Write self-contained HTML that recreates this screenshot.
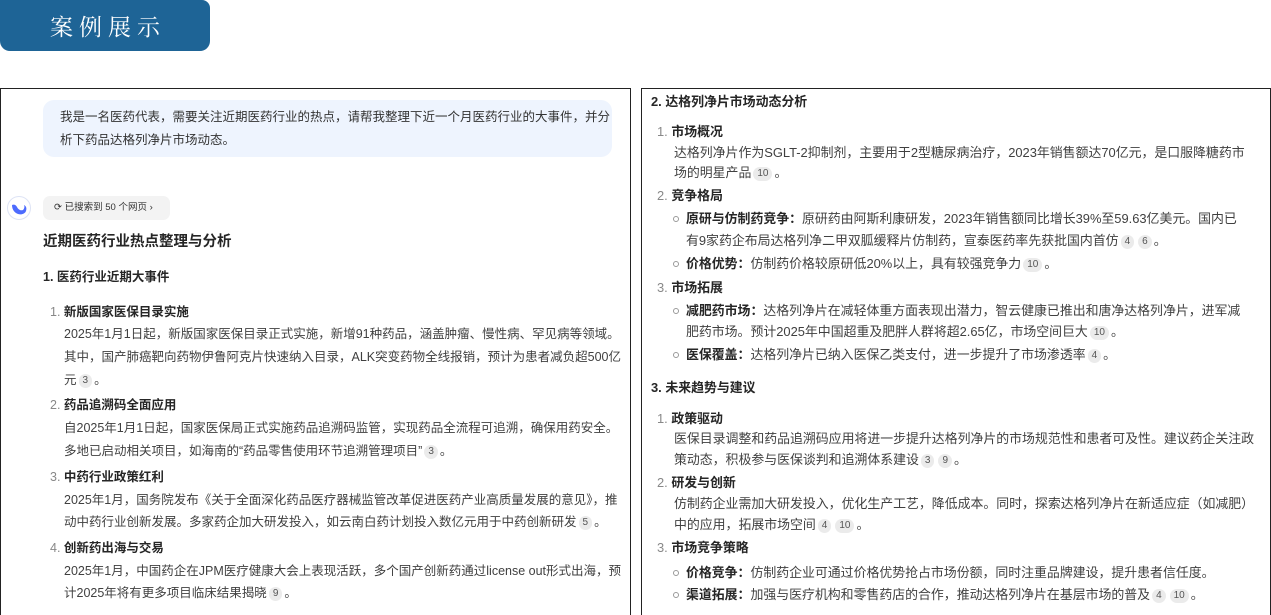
<!DOCTYPE html>
<html><head><meta charset="utf-8"><style>
*{margin:0;padding:0;box-sizing:border-box}
body{width:1271px;height:615px;background:#fff;position:relative;overflow:hidden;font-family:"Liberation Sans","Noto Sans CJK SC",sans-serif;color:#404040}
.hdr{position:absolute;left:0;top:0;width:210px;height:51px;background:#1e6496;border-radius:0 8px 10px 10px;color:#fff;font-family:"Noto Serif CJK SC","Liberation Serif",serif;font-size:23px;letter-spacing:6px;text-align:center;line-height:51px;padding-left:6px}
.panel{position:absolute;top:88px;height:527px;border:1.5px solid #222;border-bottom:none}
.l{position:absolute;white-space:nowrap;font-size:12.5px;line-height:16px}
.r{font-size:12.9px}
.b{font-weight:bold;color:#262626}
.n{color:#888}
.c{display:inline-block;background:#ebebeb;color:#555;border-radius:7px;font-size:10px;line-height:14px;height:14px;padding:0 4px;margin:0 2px;vertical-align:1px}
.dot{position:absolute;width:6px;height:6px;border:1px solid #999;border-radius:50%}
</style></head><body>
<div class="hdr">案例展示</div>

<div class="panel" style="left:0;width:631px"></div>
<div class="panel" style="left:641px;width:630px"></div>

<!-- left -->
<div style="position:absolute;left:43px;top:100px;width:569px;height:57px;background:#eef4fe;border-radius:11px"></div>
<div class="l" style="left:60px;top:109px;color:#333">我是一名医药代表，需要关注近期医药行业的热点，请帮我整理下近一个月医药行业的大事件，并分</div>
<div class="l" style="left:60px;top:132px;color:#333">析下药品达格列净片市场动态。</div>

<div style="position:absolute;left:7px;top:196px;width:24px;height:24px;border-radius:50%;border:1px solid #dde3f5;background:#fff"></div>
<svg style="position:absolute;left:11px;top:201px" width="16" height="14" viewBox="0 0 16 14"><path d="M1 4c2-1 4 0 5 2 1 2 3 4 6 3 1-1 2-3 1-5 2 1 3 3 2 6-1 3-5 4-8 3C4 12 1 9 1 4z" fill="#4d6bfe"/><circle cx="11" cy="5" r="1" fill="#fff"/></svg>
<div style="position:absolute;left:43px;top:196px;width:127px;height:24px;background:#f3f3f3;border-radius:7px"></div>
<div class="l" style="left:54px;top:201px;font-size:9.5px;line-height:14px;color:#333">⟳ 已搜索到 50 个网页 ›</div>

<div class="l b" style="left:43px;top:233px;font-size:14.5px;line-height:18px">近期医药行业热点整理与分析</div>
<div class="l b" style="left:43px;top:269px">1. 医药行业近期大事件</div>

<div class="l" style="left:50px;top:304px"><span class="n">1. </span><span class="b">新版国家医保目录实施</span></div>
<div class="l" style="left:64px;top:326px">2025年1月1日起，新版国家医保目录正式实施，新增91种药品，涵盖肿瘤、慢性病、罕见病等领域。</div>
<div class="l" style="left:64px;top:349px">其中，国产肺癌靶向药物伊鲁阿克片快速纳入目录，ALK突变药物全线报销，预计为患者减负超500亿</div>
<div class="l" style="left:64px;top:372px">元<span class="c">3</span>。</div>

<div class="l" style="left:50px;top:397px"><span class="n">2. </span><span class="b">药品追溯码全面应用</span></div>
<div class="l" style="left:64px;top:420px">自2025年1月1日起，国家医保局正式实施药品追溯码监管，实现药品全流程可追溯，确保用药安全。</div>
<div class="l" style="left:64px;top:443px">多地已启动相关项目，如海南的“药品零售使用环节追溯管理项目”<span class="c">3</span>。</div>

<div class="l" style="left:50px;top:469px"><span class="n">3. </span><span class="b">中药行业政策红利</span></div>
<div class="l" style="left:64px;top:492px">2025年1月，国务院发布《关于全面深化药品医疗器械监管改革促进医药产业高质量发展的意见》，推</div>
<div class="l" style="left:64px;top:514px">动中药行业创新发展。多家药企加大研发投入，如云南白药计划投入数亿元用于中药创新研发<span class="c">5</span>。</div>

<div class="l" style="left:50px;top:540px"><span class="n">4. </span><span class="b">创新药出海与交易</span></div>
<div class="l" style="left:64px;top:563px">2025年1月，中国药企在JPM医疗健康大会上表现活跃，多个国产创新药通过license out形式出海，预</div>
<div class="l" style="left:64px;top:585px">计2025年将有更多项目临床结果揭晓<span class="c">9</span>。</div>

<!-- right -->
<div class="l r b" style="left:651px;top:94px">2. 达格列净片市场动态分析</div>
<div class="l r" style="left:657px;top:124px"><span class="n">1. </span><span class="b">市场概况</span></div>
<div class="l r" style="left:674px;top:145px">达格列净片作为SGLT-2抑制剂，主要用于2型糖尿病治疗，2023年销售额达70亿元，是口服降糖药市</div>
<div class="l r" style="left:674px;top:165px">场的明星产品<span class="c">10</span>。</div>
<div class="l r" style="left:657px;top:188px"><span class="n">2. </span><span class="b">竞争格局</span></div>
<div class="dot" style="left:673px;top:216px"></div>
<div class="l r" style="left:686px;top:211px"><span class="b">原研与仿制药竞争：</span>原研药由阿斯利康研发，2023年销售额同比增长39%至59.63亿美元。国内已</div>
<div class="l r" style="left:686px;top:233px">有9家药企布局达格列净二甲双胍缓释片仿制药，宣泰医药率先获批国内首仿<span class="c">4</span><span class="c">6</span>。</div>
<div class="dot" style="left:673px;top:261px"></div>
<div class="l r" style="left:686px;top:256px"><span class="b">价格优势：</span>仿制药价格较原研低20%以上，具有较强竞争力<span class="c">10</span>。</div>
<div class="l r" style="left:657px;top:280px"><span class="n">3. </span><span class="b">市场拓展</span></div>
<div class="dot" style="left:673px;top:308px"></div>
<div class="l r" style="left:686px;top:303px"><span class="b">减肥药市场：</span>达格列净片在减轻体重方面表现出潜力，智云健康已推出和唐净达格列净片，进军减</div>
<div class="l r" style="left:686px;top:324px">肥药市场。预计2025年中国超重及肥胖人群将超2.65亿，市场空间巨大<span class="c">10</span>。</div>
<div class="dot" style="left:673px;top:352px"></div>
<div class="l r" style="left:686px;top:347px"><span class="b">医保覆盖：</span>达格列净片已纳入医保乙类支付，进一步提升了市场渗透率<span class="c">4</span>。</div>

<div class="l r b" style="left:651px;top:380px">3. 未来趋势与建议</div>
<div class="l r" style="left:657px;top:411px"><span class="n">1. </span><span class="b">政策驱动</span></div>
<div class="l r" style="left:674px;top:431px">医保目录调整和药品追溯码应用将进一步提升达格列净片的市场规范性和患者可及性。建议药企关注政</div>
<div class="l r" style="left:674px;top:452px">策动态，积极参与医保谈判和追溯体系建设<span class="c">3</span><span class="c">9</span>。</div>
<div class="l r" style="left:657px;top:475px"><span class="n">2. </span><span class="b">研发与创新</span></div>
<div class="l r" style="left:674px;top:496px">仿制药企业需加大研发投入，优化生产工艺，降低成本。同时，探索达格列净片在新适应症（如减肥）</div>
<div class="l r" style="left:674px;top:517px">中的应用，拓展市场空间<span class="c">4</span><span class="c">10</span>。</div>
<div class="l r" style="left:657px;top:540px"><span class="n">3. </span><span class="b">市场竞争策略</span></div>
<div class="dot" style="left:673px;top:570px"></div>
<div class="l r" style="left:686px;top:565px"><span class="b">价格竞争：</span>仿制药企业可通过价格优势抢占市场份额，同时注重品牌建设，提升患者信任度。</div>
<div class="dot" style="left:673px;top:592px"></div>
<div class="l r" style="left:686px;top:587px"><span class="b">渠道拓展：</span>加强与医疗机构和零售药店的合作，推动达格列净片在基层市场的普及<span class="c">4</span><span class="c">10</span>。</div>
</body></html>
